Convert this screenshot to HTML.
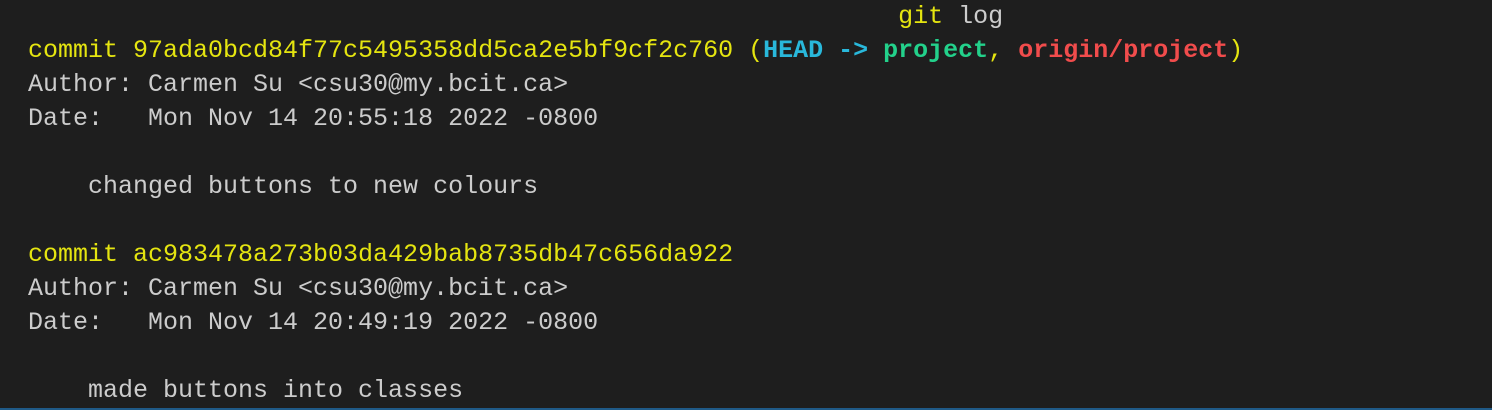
<!DOCTYPE html>
<html><head><style>
html,body{margin:0;padding:0;background:#1e1e1e;width:1492px;height:410px;overflow:hidden;}
pre{margin:0;position:absolute;left:28px;top:0px;font-family:"Liberation Mono",monospace;font-size:25px;line-height:34px;color:#cccccc;}
.y{color:#e5e510}.c{color:#29b8db;font-weight:bold}.g{color:#23d18b;font-weight:bold}.r{color:#f14c4c;font-weight:bold}
.bar{position:absolute;left:0;bottom:0;width:1492px;height:2px;background:#1f5a87;}
</style></head><body>
<pre>                                                          <span class="y">git</span> log
<span class="y">commit 97ada0bcd84f77c5495358dd5ca2e5bf9cf2c760 (</span><span class="c">HEAD -&gt; </span><span class="g">project</span><span class="y">, </span><span class="r">origin/project</span><span class="y">)</span>
Author: Carmen Su &lt;csu30@my.bcit.ca&gt;
Date:   Mon Nov 14 20:55:18 2022 -0800

    changed buttons to new colours

<span class="y">commit ac983478a273b03da429bab8735db47c656da922</span>
Author: Carmen Su &lt;csu30@my.bcit.ca&gt;
Date:   Mon Nov 14 20:49:19 2022 -0800

    made buttons into classes
</pre>
<div class="bar"></div>
</body></html>
